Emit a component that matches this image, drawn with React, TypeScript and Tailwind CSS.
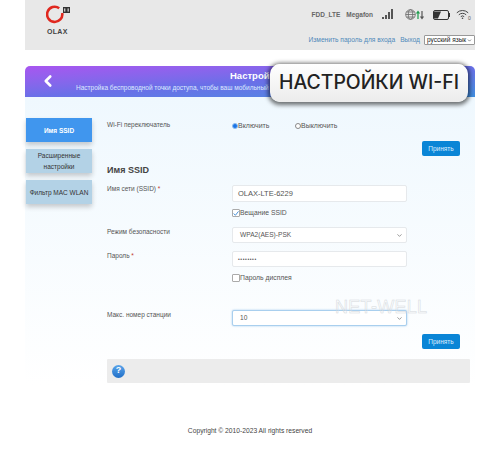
import { ChevronDown, ChevronLeft } from "lucide-react"

const font = "font-['Liberation_Sans',Arial,sans-serif]"

function Logo() {
    return (
        <div className="flex flex-col items-start w-[26px]">
            <svg width="26" height="23" viewBox="0 0 26 23">
                <path d="M13.2 3.2 A7.6 7.6 0 1 0 16.2 8" fill="none" stroke="#e0281f" strokeWidth="2.6" />
                <rect x="17" y="2" width="7" height="6" fill="#333" />
                <rect x="18.2" y="3.4" width="1.1" height="3.2" fill="#e8e8e8" />
                <rect x="21.6" y="3.4" width="1.1" height="3.2" fill="#e8e8e8" />
            </svg>
            <span className="text-[7px] leading-[8px] font-bold tracking-[0.3px] text-[#444] ml-[1px]">OLAX</span>
        </div>
    )
}

function StatusIcons() {
    return (
        <div className="flex items-center">
            <svg width="13" height="11" viewBox="0 0 13 11">
                <rect x="0" y="8" width="2" height="2" fill="#555" />
                <rect x="3" y="6" width="2" height="4" fill="#555" />
                <rect x="6" y="3" width="2" height="7" fill="#555" />
                <rect x="9" y="0" width="2" height="10" fill="#555" />
            </svg>
            <svg className="ml-[10px]" width="11" height="11" viewBox="0 0 11 11" fill="none" stroke="#666" strokeWidth="0.8">
                <circle cx="5.5" cy="5.5" r="4.8" />
                <ellipse cx="5.5" cy="5.5" rx="2.2" ry="4.8" />
                <path d="M0.7 5.5H10.3M1.4 3H9.6M1.4 8H9.6" />
            </svg>
            <svg width="8" height="10" viewBox="0 0 8 10" className="mt-[1px]">
                <path d="M2 9V2M0.5 3.5 2 1.5 3.5 3.5" fill="none" stroke="#1a9a4a" strokeWidth="1.2" />
                <path d="M6 1V8M4.5 6.5 6 8.5 7.5 6.5" fill="none" stroke="#555" strokeWidth="1.2" />
            </svg>
            <svg className="ml-[9px]" width="17" height="10" viewBox="0 0 17 10">
                <rect x="0.5" y="0.5" width="15" height="9" rx="1.5" fill="#e8e8e8" stroke="#333" />
                <path d="M1 1.5H8L5 8.5H1Z" fill="#333" />
                <rect x="16" y="3" width="1" height="4" fill="#333" />
            </svg>
            <svg className="ml-[6px]" width="16" height="11" viewBox="0 0 16 11" fill="none" stroke="#444">
                <path d="M0.8 3.8A8.2 8.2 0 0 1 12.2 3.8" />
                <path d="M2.8 5.8A5.4 5.4 0 0 1 10.2 5.8" />
                <path d="M4.8 7.6A2.6 2.6 0 0 1 8.2 7.6" />
                <circle cx="6.5" cy="9.3" r="0.8" fill="#444" stroke="none" />
                <text x="12" y="10.5" fontSize="5" fill="#555" stroke="none">0</text>
            </svg>
        </div>
    )
}

function Tab({ children, active }: { children: React.ReactNode; active?: boolean }) {
    return (
        <div className={`w-[66px] h-[24px] flex items-center justify-center text-center text-[6.5px] leading-[11px] shadow-[0_3px_5px_rgba(0,0,0,0.2)] ${active ? "bg-[#4096ee] text-white font-bold" : "bg-[#b3d2e6] text-[#333]"}`}>
            {children}
        </div>
    )
}

function ApplyButton() {
    return (
        <div className="flex justify-end pr-[15px]">
            <div className="w-[38px] h-[15px] rounded-[2px] bg-[#0a85d6] text-[#dbeeff] text-[6.5px] flex items-center justify-center">Принять</div>
        </div>
    )
}

function Field({ label, required, top, children }: { label: string; required?: boolean; top: string; children: React.ReactNode }) {
    return (
        <div className="flex">
            <div className={`w-[125px] text-[6.5px] leading-[8px] text-[#555] ${top}`}>
                {label}
                {required && <span className="text-[#c0392b]"> *</span>}
            </div>
            {children}
        </div>
    )
}

function Box({ children, select, focus, tall }: { children: React.ReactNode; select?: boolean; focus?: boolean; tall?: boolean }) {
    return (
        <div className={`w-[175px] bg-white rounded-[2px] border flex items-center justify-between pr-[3px] text-[#555] ${select ? "pl-[7px] text-[6.6px]" : "pl-[5px] text-[7.5px]"} ${tall ? "h-[17px]" : "h-[16px]"} ${focus ? "border-[#a9cfee] shadow-[0_0_2px_rgba(90,160,220,0.6)]" : "border-[#e6e9ec]"}`}>
            <span>{children}</span>
            {select && <ChevronDown size={7} strokeWidth={2} className="text-[#555]" />}
        </div>
    )
}

function Check({ label, checked }: { label: string; checked?: boolean }) {
    return (
        <div className="flex items-center text-[6.8px] leading-[8px] text-[#555]">
            <div className="w-[8px] h-[8px] bg-white border border-[#aaa] rounded-[1px] flex items-center justify-center">
                {checked && (
                    <svg width="7" height="7" viewBox="0 0 7 7">
                        <path d="M0.8 3.5 2.8 5.6 6.4 1" fill="none" stroke="#2b7fd0" strokeWidth="1" />
                    </svg>
                )}
            </div>
            {label}
        </div>
    )
}

function Radio({ label, on }: { label: string; on?: boolean }) {
    return (
        <div className="flex items-center text-[7px] leading-[8px] text-[#555]">
            <div className={`w-[6px] h-[6px] rounded-full border ${on ? "border-[#8dbdec] bg-[#1a73e8]" : "border-[#888] bg-white"}`} />
            {label}
        </div>
    )
}

export default function App() {
    return (
        <div className={`relative w-[500px] h-[450px] bg-white px-[25px] overflow-hidden ${font}`}>
            {/* header */}
            <div className="h-[50px] bg-[#e8e8e8] relative flex">
                <div className="pl-[21px] pt-[5px]">
                    <Logo />
                </div>
                <div className="flex-1 flex flex-col items-end">
                    <div className="flex items-center h-[11px] mt-[9px] pr-[3px]">
                        <span className="text-[6.5px] font-bold text-[#666]">FDD_LTE</span>
                        <span className="text-[6.5px] font-bold text-[#666] ml-[6px]">Megafon</span>
                        <div className="ml-[9px]">
                            <StatusIcons />
                        </div>
                    </div>
                    <div className="flex items-center mt-[15px] text-[6.65px] text-[#4f88ba]">
                        <span>Изменить пароль для входа</span>
                        <span className="ml-[5px]">Выход</span>
                        <div className="ml-[4px] w-[51px] h-[10px] bg-white border border-[#999] rounded-[1px] flex items-center justify-between px-[2px] text-[6.5px] text-[#222]">
                            <span>русский язык</span>
                            <ChevronDown size={5} strokeWidth={2.5} />
                        </div>
                    </div>
                </div>
            </div>

            {/* banner */}
            <div className="mt-[16px] h-[31px] rounded-t-[5px] bg-gradient-to-br from-[#a855f0] via-[#6a6fe8] to-[#3f8fe0] relative text-center text-white">
                <ChevronLeft size={18} strokeWidth={3.5} className="absolute left-[14px] top-[6px]" />
                <div className="text-[9.5px] leading-[11px] font-bold pt-[4px] pl-[54px] h-[18px] text-left ml-[151px]">Настройки Wi-Fi</div>
                <div className="text-[6.5px] leading-[8px] text-[#dfe9ff] text-left pl-[51px] whitespace-nowrap overflow-hidden">Настройка беспроводной точки доступа, чтобы ваш мобильный телефон подключался к сети</div>
            </div>

            {/* panel */}
            <div className="h-[288px] bg-gradient-to-b from-[#eff8fe] to-[#ffffff] flex">
                <div className="w-[82px] pl-[1px] pt-[21px] flex flex-col gap-[7px]">
                    <Tab active>Имя SSID</Tab>
                    <Tab>
                        Расширенные
                        <br />
                        настройки
                    </Tab>
                    <Tab>Фильтр MAC WLAN</Tab>
                </div>
                <div className="flex-1 pt-[24px]">
                    <Field label="Wi-Fi переключатель" top="">
                        <div className="flex pt-[1px]">
                            <div className="w-[63px]">
                                <Radio label="Включить" on />
                            </div>
                            <Radio label="Выключить" />
                        </div>
                    </Field>
                    <div className="mt-[11px]">
                        <ApplyButton />
                    </div>
                    <div className="mt-[8px] text-[9px] leading-[12px] font-bold text-[#444]">Имя SSID</div>
                    <div className="mt-[9px]">
                        <Field label="Имя сети (SSID)" required top="pt-[0px]">
                            <Box tall>OLAX-LTE-6229</Box>
                        </Field>
                    </div>
                    <div className="ml-[125px] mt-[7px]">
                        <Check label="Вещание SSID" checked />
                    </div>
                    <div className="mt-[10px]">
                        <Field label="Режим безопасности" top="pt-[1px]">
                            <Box select>WPA2(AES)-PSK</Box>
                        </Field>
                    </div>
                    <div className="mt-[8px]">
                        <Field label="Пароль" required top="pt-[1px]">
                            <Box>
                                <span className="text-[5px] tracking-[0.6px]">••••••••</span>
                            </Box>
                        </Field>
                    </div>
                    <div className="ml-[125px] mt-[7px]">
                        <Check label="Пароль дисплея" />
                    </div>
                    <div className="mt-[28px]">
                        <Field label="Макс. номер станции" top="pt-[1px]">
                            <Box select focus>10</Box>
                        </Field>
                    </div>
                    <div className="mt-[8px]">
                        <ApplyButton />
                    </div>
                    <div className="mt-[10px] mr-[5px] h-[24px] bg-[#ececec] rounded-[1px] flex items-center pl-[5px]">
                        <div className="w-[13px] h-[13px] rounded-full bg-gradient-to-b from-[#5aa5ea] to-[#1f6fc8] text-white text-[9px] font-bold flex items-center justify-center">?</div>
                    </div>
                </div>
            </div>

            {/* footer */}
            <div className="mt-[41px] text-center text-[6.7px] leading-[9px] text-[#444]">Copyright © 2010-2023 All rights reserved</div>

            {/* overlay title */}
            <div className="absolute left-[270px] top-[64px] w-[198px] h-[38px] rounded-[10px] bg-gradient-to-b from-white to-[#ececec] shadow-[0_1px_4px_2px_rgba(0,0,0,0.55)] flex items-center justify-center text-[19.4px] font-['Inter',sans-serif] font-medium text-[#222] whitespace-nowrap">
                НАСТРОЙКИ WI-FI
            </div>

            {/* watermark */}
            <div className="absolute left-[335px] top-[297px] text-[18px] leading-[20px] tracking-[0.3px] text-transparent [-webkit-text-stroke:0.5px_#d5d9dc]">NET-WELL</div>
        </div>
    )
}
